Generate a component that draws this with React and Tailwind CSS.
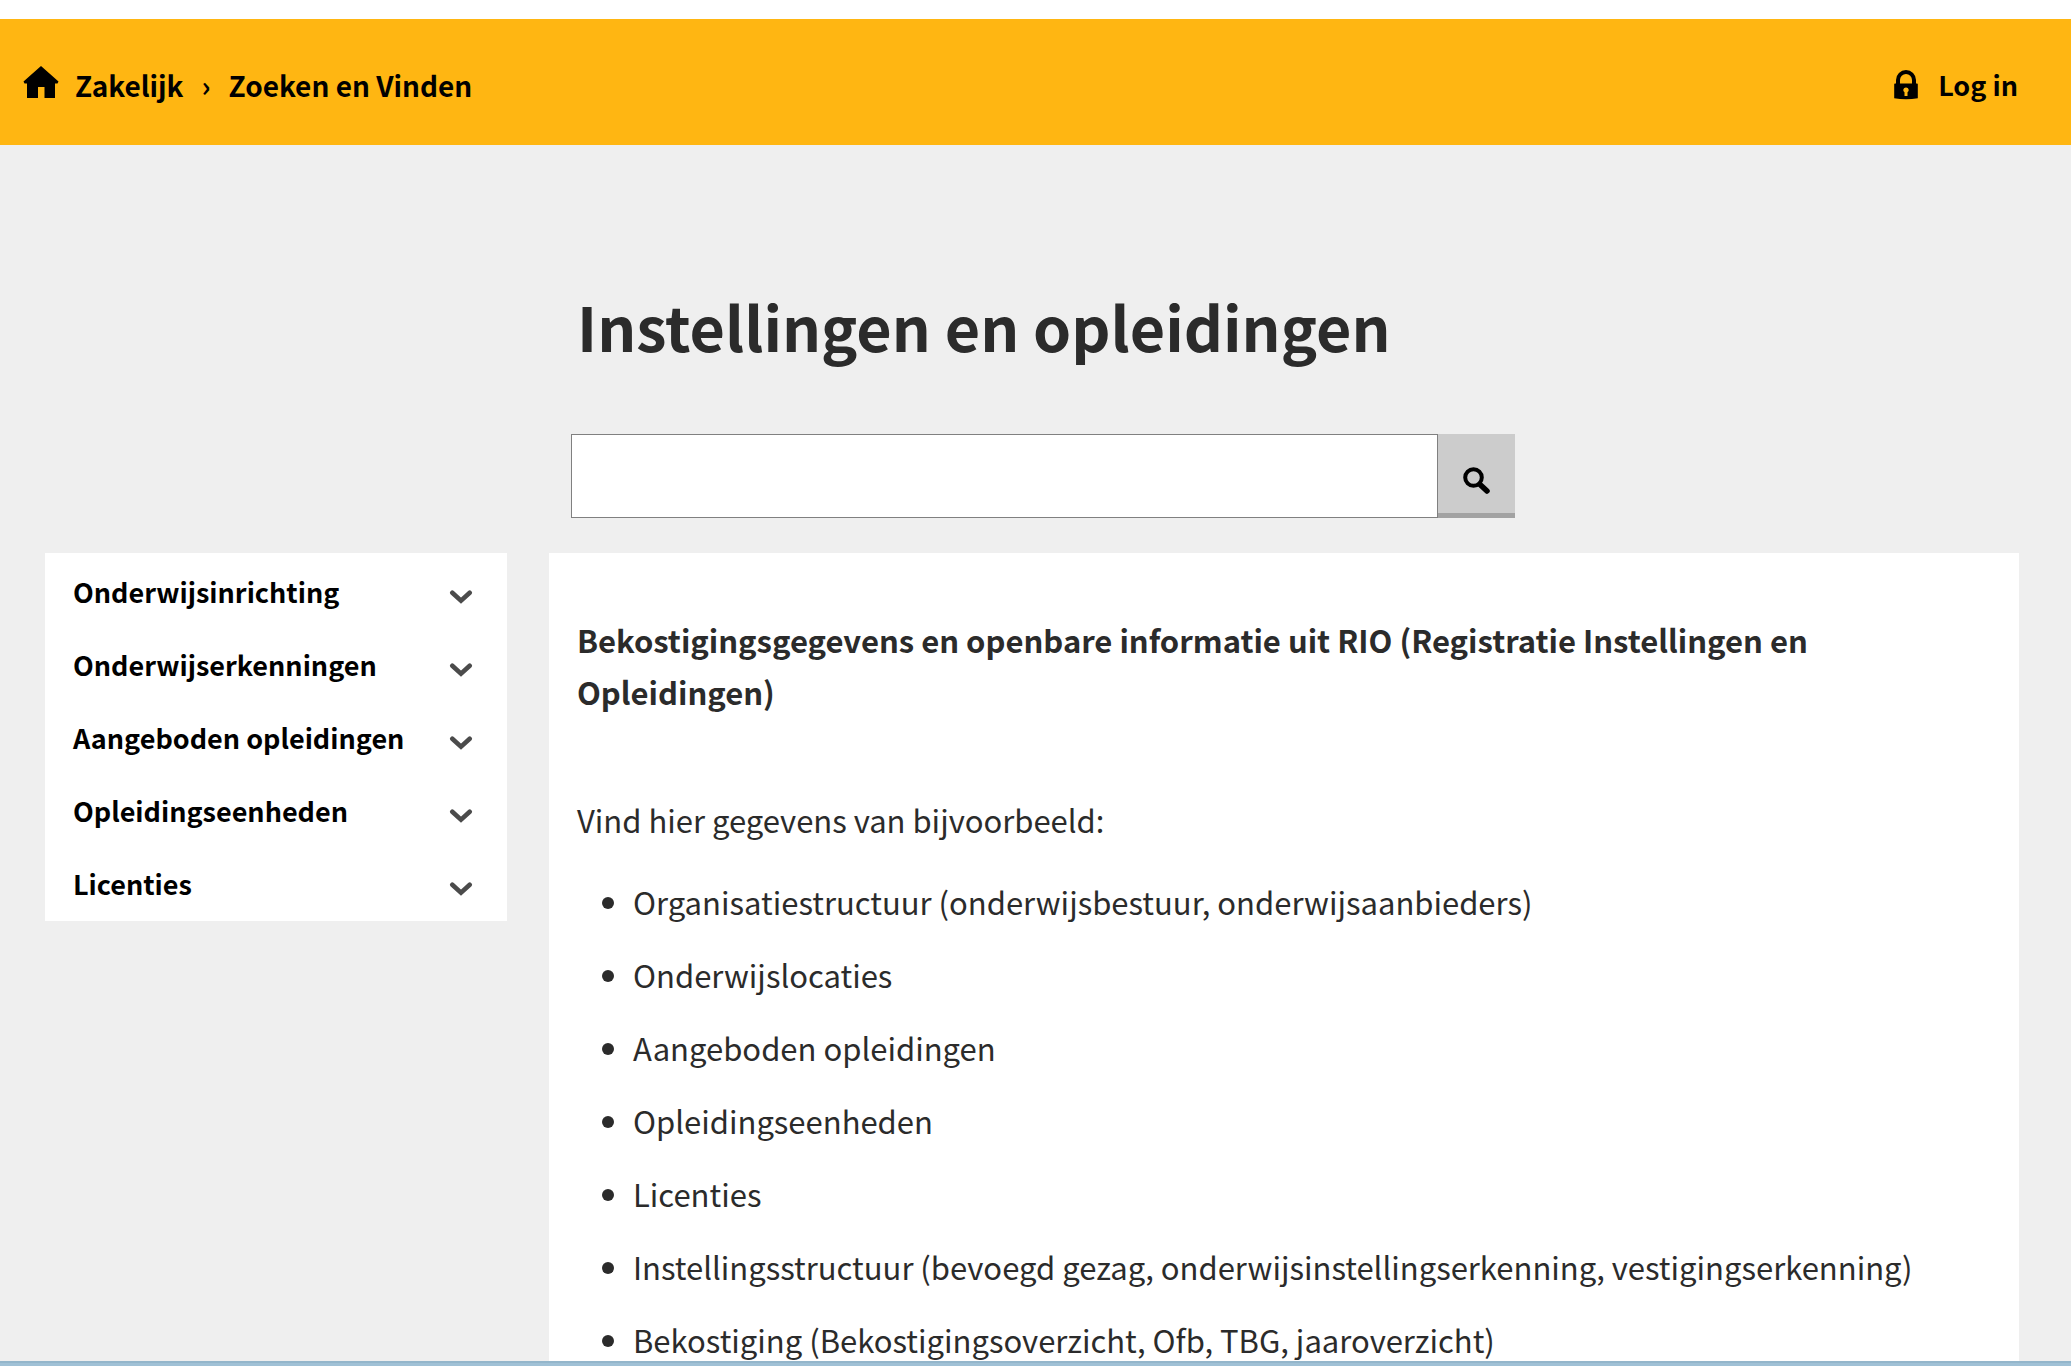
const navItems = [
  "Onderwijsinrichting",
  "Onderwijserkenningen",
  "Aangeboden opleidingen",
  "Opleidingseenheden",
  "Licenties",
];

const topics = [
  "Organisatiestructuur (onderwijsbestuur, onderwijsaanbieders)",
  "Onderwijslocaties",
  "Aangeboden opleidingen",
  "Opleidingseenheden",
  "Licenties",
  "Instellingsstructuur (bevoegd gezag, onderwijsinstellingserkenning, vestigingserkenning)",
  "Bekostiging (Bekostigingsoverzicht, Ofb, TBG, jaaroverzicht)",
];

function HomeIcon() {
  return (
    <svg width="36" height="32" viewBox="0 0 36 32" fill="currentColor" aria-hidden="true">
      <path d="M18 0 35.5 15.5 34.5 17.5H32V32H21.500V21H15V32H4V17.500H1.500L.5 15.500Z" />
    </svg>
  );
}

function LockIcon() {
  return (
    <svg width="24" height="30" viewBox="0 0 24 30" fill="none" aria-hidden="true">
      <path d="M4 14V10a8 8 0 0 1 16 0v4" stroke="currentColor" strokeWidth="4" />
      <path
        fill="currentColor"
        fillRule="evenodd"
        d="M1 13.500H23a.8.8 0 0 1 .8.800V28.300Q12 30 .2 28.300V14.300A.8.800 0 0 1 1 13.500ZM12 17.500a2.600 2.600 0 0 0-1.500 4.800V26h3v-3.700A2.600 2.600 0 0 0 12 17.500Z"
      />
    </svg>
  );
}

function SearchIcon() {
  return (
    <svg width="27" height="27" viewBox="0 0 27 27" fill="none" stroke="currentColor" aria-hidden="true">
      <circle cx="10.500" cy="10.500" r="8.300" strokeWidth="4" />
      <path d="M17 17.500 24 24" strokeWidth="5.500" strokeLinecap="round" />
    </svg>
  );
}

function ChevronIcon() {
  return (
    <svg width="24" height="14" viewBox="0 0 24 14" fill="none" stroke="#4b4b4b" aria-hidden="true">
      <path d="M3.300 2.700 12 10.700 20.700 2.700" strokeWidth="4.600" strokeLinecap="round" />
    </svg>
  );
}

function Header() {
  return (
    <header className="mt-[19px] h-[126px] pt-1.5 pl-[23px] pr-[53px] flex items-center justify-between bg-[#ffb612] text-black text-[27px] font-bold">
      <nav aria-label="Kruimelpad" className="flex items-center text-[28px]">
        <a href="#home" aria-label="Home" className="mr-4 pb-1.5">
          <HomeIcon />
        </a>
        <a href="#zakelijk">Zakelijk</a>
        <span className="mx-[18px]">›</span>
        <a href="#zoeken">Zoeken en Vinden</a>
      </nav>
      <a href="#login" className="flex items-center gap-5">
        <LockIcon />
        Log in
      </a>
    </header>
  );
}

function SearchBar() {
  return (
    <form role="search" className="mt-[62px] ml-[22px] w-[944px] max-w-full h-[84px] flex">
      <input
        type="text"
        aria-label="Zoeken"
        className="flex-1 min-w-0 px-5 bg-white border border-[#808080] outline-none"
      />
      <button
        type="button"
        aria-label="Zoek"
        className="w-[77px] pt-3.5 flex items-center justify-center bg-[#cccccc] border-b-5 border-[#a2a2a2] text-black"
      >
        <SearchIcon />
      </button>
    </form>
  );
}

function SideNav() {
  return (
    <nav aria-label="Onderwerpen" className="w-[462px] shrink-0 self-start bg-white pt-[3px]">
      {navItems.map((item) => (
        <button
          key={item}
          type="button"
          className="w-full h-[73px] pl-7 pr-[34px] flex items-center justify-between text-left text-[27px] font-bold text-black"
        >
          {item}
          <span className="pt-2">
            <ChevronIcon />
          </span>
        </button>
      ))}
    </nav>
  );
}

export default function App() {
  return (
    <div className="h-screen overflow-hidden flex flex-col bg-white text-[#2b2b2b] font-['Noto_Sans_CJK_JP','Open_Sans',sans-serif]">
      <Header />
      <div className="flex-1 min-h-0 pl-[45px] pr-[52px] flex flex-col bg-[#efefef]">
        <div className="pl-[504px] pt-[135px]">
          <h1 className="pl-7 text-[61px] leading-[92px] font-bold">Instellingen en opleidingen</h1>
          <SearchBar />
        </div>
        <div className="mt-[35px] flex-1 min-h-0 flex gap-[42px]">
          <SideNav />
          <main className="flex-1 px-7 pt-[61px] bg-white text-[31px] leading-[52px]">
            <h2 className="font-bold">
              Bekostigingsgegevens en openbare informatie uit RIO (Registratie Instellingen en Opleidingen)
            </h2>
            <p className="mt-[76px]">Vind hier gegevens van bijvoorbeeld:</p>
            <ul className="mt-[30px] pl-14 list-disc flex flex-col gap-[21px]">
              {topics.map((topic) => (
                <li key={topic}>{topic}</li>
              ))}
            </ul>
          </main>
        </div>
      </div>
      <div className="fixed inset-x-0 bottom-0 h-[5px] bg-[#a0c1d6] border-t-2 border-[#94b6cb]" />
    </div>
  );
}
